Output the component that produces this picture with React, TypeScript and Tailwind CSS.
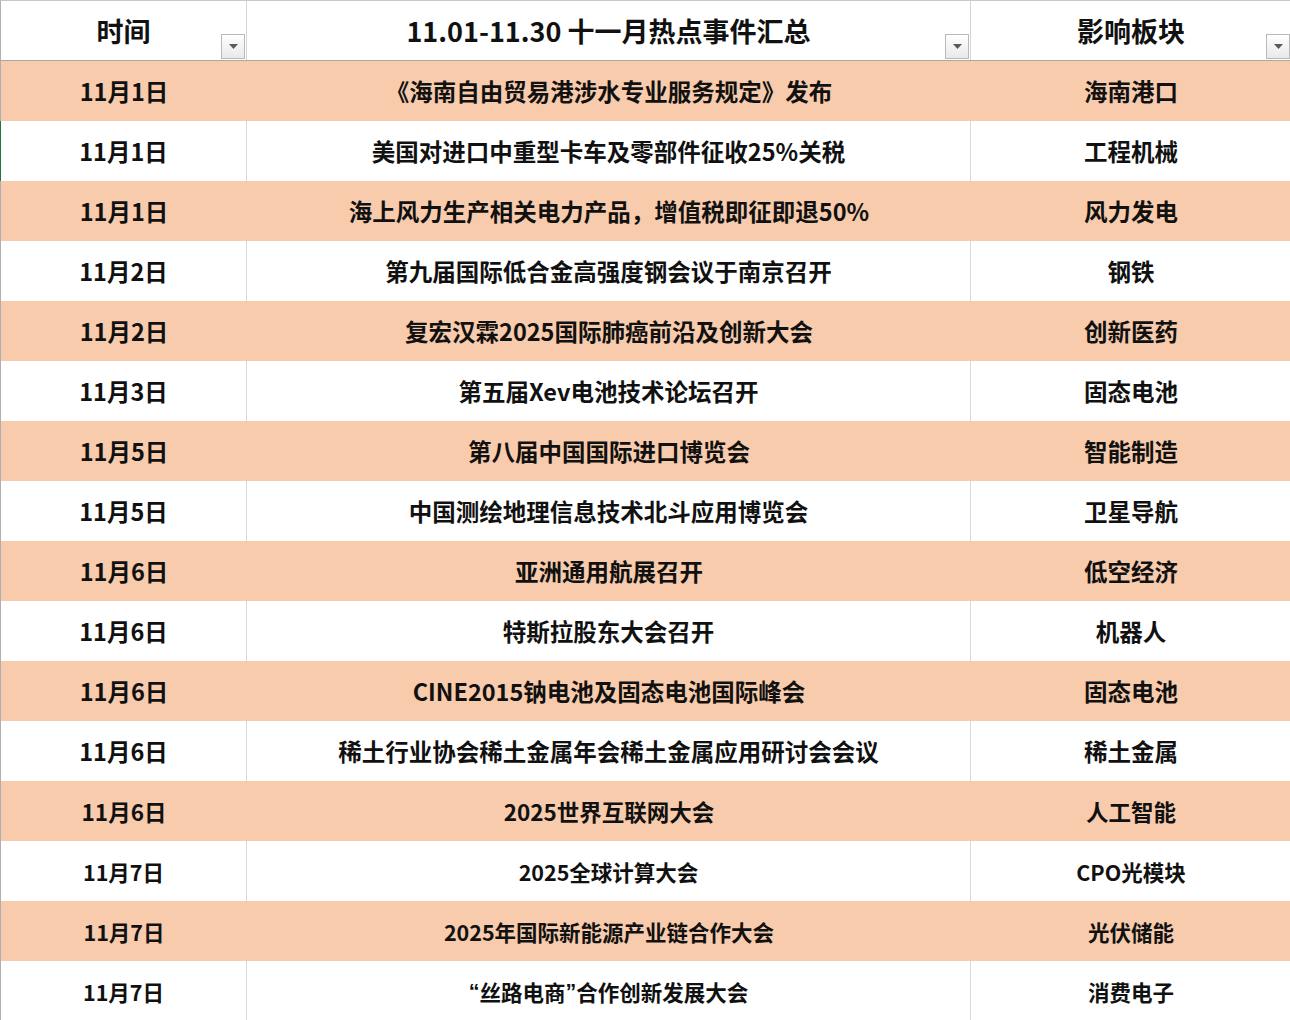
import React from "react";

const Q = ({ c }: { c: string }) => (
  <span style={{ fontFamily: '"Liberation Sans", sans-serif' }}>{c}</span>
);

const rows: [string, React.ReactNode, string, string?][] = [
  ["11月1日", "《海南自由贸易港涉水专业服务规定》发布", "海南港口"],
  ["11月1日", "美国对进口中重型卡车及零部件征收25%关税", "工程机械"],
  ["11月1日", "海上风力生产相关电力产品，增值税即征即退50%", "风力发电"],
  ["11月2日", "第九届国际低合金高强度钢会议于南京召开", "钢铁"],
  ["11月2日", "复宏汉霖2025国际肺癌前沿及创新大会", "创新医药"],
  ["11月3日", "第五届Xev电池技术论坛召开", "固态电池"],
  ["11月5日", "第八届中国国际进口博览会", "智能制造"],
  ["11月5日", "中国测绘地理信息技术北斗应用博览会", "卫星导航"],
  ["11月6日", "亚洲通用航展召开", "低空经济"],
  ["11月6日", "特斯拉股东大会召开", "机器人"],
  ["11月6日", "CINE2015钠电池及固态电池国际峰会", "固态电池"],
  ["11月6日", "稀土行业协会稀土金属年会稀土金属应用研讨会会议", "稀土金属"],
  ["11月6日", "2025世界互联网大会", "人工智能", "m"],
  ["11月7日", "2025全球计算大会", "CPO光模块", "s"],
  ["11月7日", "2025年国际新能源产业链合作大会", "光伏储能", "s"],
  [
    "11月7日",
    <>
      <Q c="“" />丝路电商<Q c="”" />合作创新发展大会
    </>,
    "消费电子",
    "s",
  ],
];

function FilterBtn() {
  return (
    <div className="absolute right-[1px] bottom-[1px] w-[24px] h-[25px] border border-[#b9b9b9] bg-gradient-to-b from-[#ffffff] to-[#e9e9e9] flex items-center justify-center">
      <svg width="9" height="5" viewBox="0 0 9 5">
        <polygon points="0,0 9,0 4.5,5" fill="#5a5a5a" />
      </svg>
    </div>
  );
}

export default function App() {
  const font = { fontFamily: '"Noto Sans CJK SC", "Noto Sans", sans-serif' };
  return (
    <div className="w-[1290px] h-[1020px] overflow-hidden bg-white text-[#111]" style={font}>
      <div className="grid grid-cols-[246px_724px_320px] h-[61px] border-t border-[#c8c8c8] border-b border-b-[#a8a8a8] border-l border-l-[#b0b0b0]">
        <div className="relative flex items-center justify-center border-r border-[#d4d4d4] text-[27px] font-semibold pt-[2px]">
          时间
          <FilterBtn />
        </div>
        <div className="relative flex items-center justify-center border-r border-[#d4d4d4] text-[27px] font-semibold pt-[2px]">
          11.01-11.30 十一月热点事件汇总
          <FilterBtn />
        </div>
        <div className="relative flex items-center justify-center text-[27px] font-semibold pt-[2px]">
          影响板块
          <FilterBtn />
        </div>
      </div>
      {rows.map((r, i) => {
        const peach = i % 2 === 0;
        const size = r[3] === "s" ? " text-[21.5px]" : r[3] === "m" ? " text-[22.5px]" : " text-[23.5px]";
        return (
          <div
            key={i}
            className={
              "grid grid-cols-[246px_724px_320px] h-[60px] border-l font-semibold " +
              (i === 1 ? "border-l-[#217346]" : "border-l-[#b0b0b0]") +
              (peach ? " bg-[#f7cbac]" : " bg-white") +
              size
            }
          >
            <div className={"flex items-center justify-center pt-[2px] " + (peach ? "" : "border-r border-[#d9d9d9]")}>{r[0]}</div>
            <div className={"flex items-center justify-center pt-[2px] " + (peach ? "" : "border-r border-[#d9d9d9]")}>{r[1]}</div>
            <div className="flex items-center justify-center pt-[2px]">{r[2]}</div>
          </div>
        );
      })}
    </div>
  );
}
